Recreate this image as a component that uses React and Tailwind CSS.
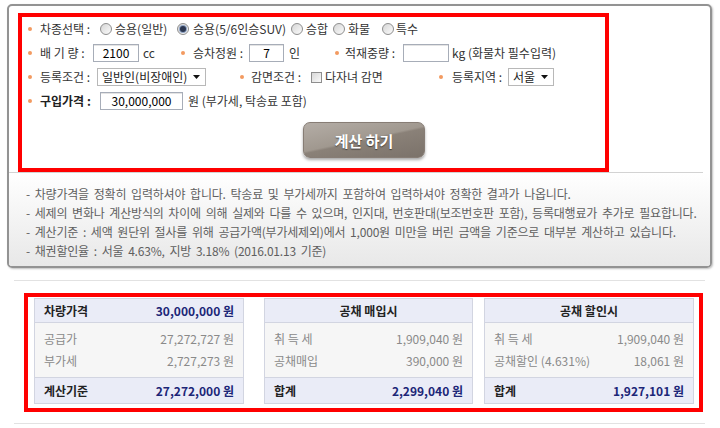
import React from 'react'

const Bullet = () => <span className="w-[4px] h-[4px] rounded-full bg-[#f39a60] shrink-0" />

const Radio = ({ on }) => (
  <span className="w-[12px] h-[12px] rounded-full border border-[#8e8e8e] bg-gradient-to-br from-[#d6d6d6] to-[#fbfbfb] flex items-center justify-center shrink-0">
    {on && <span className="w-[6px] h-[6px] rounded-full bg-[#2a3650] ring-1 ring-[#8fa3c4]" />}
  </span>
)

const Box = ({ w, children }) => (
  <div className={`${w} h-[18px] border border-[#a7adb8] bg-white flex items-center justify-center text-black text-[12px] shadow-[inset_0_1px_0_#e4e4e4]`}>
    {children}
  </div>
)

const Select = ({ w, label }) => (
  <div className={`${w} h-[18px] border border-[#b8b8b8] bg-white flex items-center justify-between pl-[4px] pr-[5px] text-[12px] text-[#222]`}>
    <span>{label}</span>
    <svg width="7" height="4" viewBox="0 0 7 4"><polygon points="0,0 7,0 3.5,4" fill="#111" /></svg>
  </div>
)

const summary = [
  {
    title: '차량가격', titleValue: '30,000,000 원',
    rows: [['공급가', '27,272,727 원'], ['부가세', '2,727,273 원']],
    foot: ['계산기준', '27,272,000 원'], w: 'w-[210px]',
  },
  {
    title: '공채 매입시',
    rows: [['취 득 세', '1,909,040 원'], ['공채매입', '390,000 원']],
    foot: ['합계', '2,299,040 원'], w: 'w-[209px] ml-[20px]',
  },
  {
    title: '공채 할인시',
    rows: [['취 득 세', '1,909,040 원'], ['공채할인 (4.631%)', '18,061 원']],
    foot: ['합계', '1,927,101 원'], w: 'w-[210px] ml-[11px]',
  },
]

const notes = [
  '- 차량가격을 정확히 입력하셔야 합니다. 탁송료 및 부가세까지 포함하여 입력하셔야 정확한 결과가 나옵니다.',
  '- 세제의 변화나 계산방식의 차이에 의해 실제와 다를 수 있으며, 인지대, 번호판대(보조번호판 포함), 등록대행료가 추가로 필요합니다.',
  '- 계산기준 : 세액 원단위 절사를 위해 공급가액(부가세제외)에서 1,000원 미만을 버린 금액을 기준으로 대부분 계산하고 있습니다.',
  '- 채권할인율 : 서울 4.63%, 지방 3.18% (2016.01.13 기준)',
]

export default function App() {
  return (
    <div className="w-[720px] h-[428px] bg-white overflow-hidden pt-[4px] font-['Noto_Sans_CJK_KR','Noto_Sans',sans-serif] text-[#333]">
      {/* calculator panel */}
      <div className="ml-[7px] w-[705px] h-[264px] border-2 border-[#939393] rounded-[5px] shadow-[1px_1px_2px_rgba(0,0,0,0.25)] overflow-hidden flex flex-col">
        <div className="pt-[7px] mr-[7px] border-b border-[#d3d3d3]">
          <div className="ml-[9px] w-[591px] h-[159px] border-4 border-[#ff0000] text-[12px] leading-none">
            {/* row 1 */}
            <div className="flex items-center h-[24px] pl-[6px]">
              <Bullet />
              <span className="ml-[8px] w-[60px]">차종선택 :</span>
              <div className="flex items-center w-[77px]"><Radio /><span className="ml-[3px]">승용(일반)</span></div>
              <div className="flex items-center w-[114px]"><Radio on /><span className="ml-[4px]">승용(5/6인승SUV)</span></div>
              <div className="flex items-center w-[42px]"><Radio /><span className="ml-[3px]">승합</span></div>
              <div className="flex items-center w-[49px]"><Radio /><span className="ml-[3px]">화물</span></div>
              <div className="flex items-center"><Radio /><span className="ml-[2px]">특수</span></div>
            </div>
            {/* row 2 */}
            <div className="flex items-center h-[24px] pl-[6px]">
              <div className="flex items-center w-[153px]">
                <Bullet />
                <span className="ml-[8px] w-[53px]">배 기 량 :</span>
                <Box w="w-[46px]">2100</Box>
                <span className="ml-[4px]">cc</span>
              </div>
              <div className="flex items-center w-[154px]">
                <Bullet />
                <span className="ml-[8px] w-[56px]">승차정원 :</span>
                <Box w="w-[35px]">7</Box>
                <span className="ml-[5px]">인</span>
              </div>
              <div className="flex items-center">
                <Bullet />
                <span className="ml-[6px] w-[58px]">적재중량 :</span>
                <Box w="w-[46px]"></Box>
                <span className="ml-[3px]">kg (화물차 필수입력)</span>
              </div>
            </div>
            {/* row 3 */}
            <div className="flex items-center h-[24px] pl-[6px]">
              <div className="flex items-center w-[212px]">
                <Bullet />
                <span className="ml-[8px] w-[57px]">등록조건 :</span>
                <Select w="w-[109px]" label="일반인(비장애인)" />
              </div>
              <div className="flex items-center w-[199px]">
                <Bullet />
                <span className="ml-[7px] w-[60px]">감면조건 :</span>
                <span className="w-[11px] h-[11px] border border-[#8e8e8e] bg-gradient-to-br from-[#d8d8d8] to-[#fafafa] shrink-0" />
                <span className="ml-[3px]">다자녀 감면</span>
              </div>
              <div className="flex items-center">
                <Bullet />
                <span className="ml-[9px] w-[56px]">등록지역 :</span>
                <Select w="w-[46px]" label="서울" />
              </div>
            </div>
            {/* row 4 */}
            <div className="flex items-center h-[24px] pl-[6px]">
              <Bullet />
              <span className="ml-[8px] w-[60px] font-bold text-[#222]">구입가격 :</span>
              <Box w="w-[83px]">30,000,000</Box>
              <span className="ml-[5px]">원 (부가세, 탁송료 포함)</span>
            </div>
            {/* button */}
            <div className="mt-[9px] ml-[281px]">
              <button className="w-[122px] h-[36px] rounded-[7px] border border-[#877d75] bg-[linear-gradient(168deg,#b4ada6_0%,#a0988f_48%,#8a8178_52%,#7b726a_100%)] shadow-[0_2px_3px_rgba(0,0,0,0.35)] text-white font-bold text-[15px] [text-shadow:0_1px_1px_rgba(0,0,0,0.5)]">
                계산 하기
              </button>
            </div>
          </div>
        </div>
        {/* notes */}
        <div className="flex-1 pt-[11px] pl-[17px] bg-gradient-to-b from-[#ffffff] to-[#e8e8e8] text-[12px] leading-[19px] text-[#5f5f5f] tracking-[-0.2px] [word-spacing:2.3px]">
          {notes.map((n) => (
            <div key={n} className="whitespace-nowrap">{n}</div>
          ))}
        </div>
      </div>

      {/* summary */}
      <div className="mt-[12px] ml-[14px] w-[691px] h-px bg-[#e2e2e2]" />
      <div className="mt-[12px] ml-[24px] w-[679px] h-[119px] border-4 border-[#ff0000] pt-[1px] pl-[6px] flex text-[12px]">
        {summary.map((t) => (
          <div key={t.foot[1]} className={`${t.w} h-[106px] border border-[#d2d5e1] flex flex-col`}>
            <div className="h-[24px] bg-[#eaecf7] border-b border-[#d2d5e1] flex items-center px-[9px] font-bold">
              {t.titleValue ? (
                <div className="flex-1 flex justify-between">
                  <span className="text-[#222]">{t.title}</span>
                  <span className="text-[#1c2677]">{t.titleValue}</span>
                </div>
              ) : (
                <span className="flex-1 text-center text-[#222]">{t.title}</span>
              )}
            </div>
            <div className="h-[54px] bg-[#f6f6f6] pt-[5px] px-[9px] text-[#8a8a8a]">
              {t.rows.map((r) => (
                <div key={r[0]} className="h-[22px] flex items-center justify-between">
                  <span>{r[0]}</span>
                  <span>{r[1]}</span>
                </div>
              ))}
            </div>
            <div className="flex-1 bg-[#eaecf7] border-t border-[#d2d5e1] flex items-center justify-between px-[9px] font-bold">
              <span className="text-[#222]">{t.foot[0]}</span>
              <span className="text-[#1c2677]">{t.foot[1]}</span>
            </div>
          </div>
        ))}
      </div>
      <div className="mt-[11px] ml-[14px] w-[691px] h-px bg-[#e2e2e2]" />
    </div>
  )
}
